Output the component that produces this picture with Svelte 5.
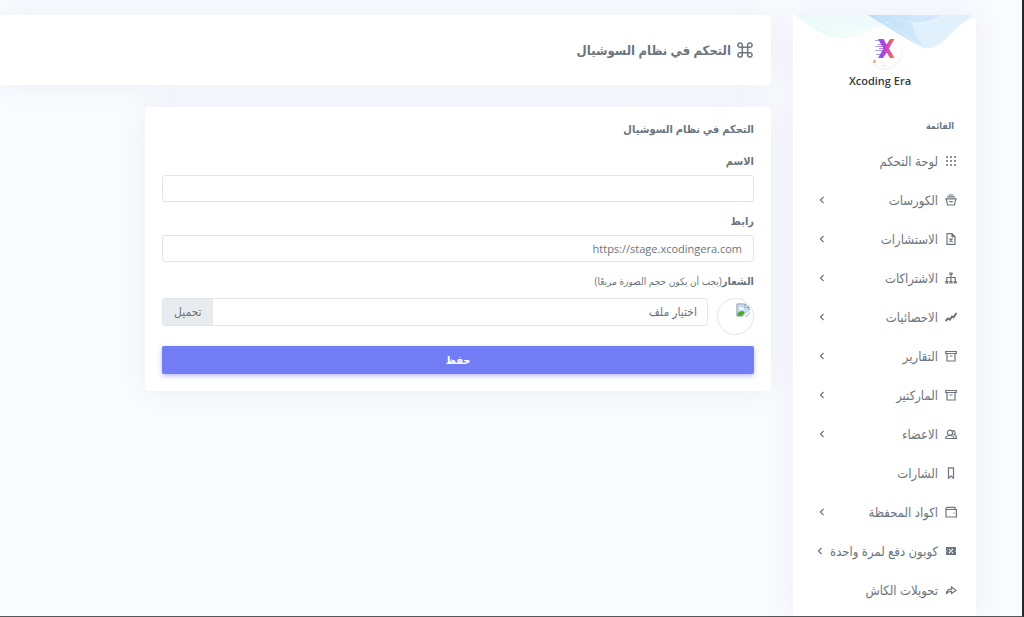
<script lang="ts">
  type Item = { label: string; icon: string; sub: boolean };

  const items: Item[] = [
    { label: "لوحة التحكم", icon: "grid", sub: false },
    { label: "الكورسات", icon: "basket", sub: true },
    { label: "الاستشارات", icon: "file", sub: true },
    { label: "الاشتراكات", icon: "sitemap", sub: true },
    { label: "الاحصائيات", icon: "chart", sub: true },
    { label: "التقارير", icon: "archive", sub: true },
    { label: "الماركتير", icon: "archive", sub: true },
    { label: "الاعضاء", icon: "users", sub: true },
    { label: "الشارات", icon: "bookmark", sub: false },
    { label: "اكواد المحفظة", icon: "wallet", sub: true },
    { label: "كوبون دفع لمرة واحدة", icon: "coupon", sub: true },
    { label: "تحويلات الكاش", icon: "share", sub: false },
  ];

  const dots = [2, 6, 10];

  let name = $state("");
  let link = $state("https://stage.xcodingera.com");
  let fileName = $state("اختيار ملف");

  function onfile(event: Event) {
    const input = event.currentTarget as HTMLInputElement;
    fileName = input.files?.[0]?.name ?? "اختيار ملف";
  }
</script>

{#snippet icon(kind: string)}
  <svg class="icon" viewBox="0 0 12 12" aria-hidden="true">
    {#if kind === "grid"}
      {#each dots as y}
        {#each dots as x}
          <rect class="dot" x={x - 1} y={y - 1} width="2" height="2" />
        {/each}
      {/each}
    {:else if kind === "basket"}
      <path d="M3.5 1h5M2 2.8h8M.3 4.8h11.4M1.3 5l1.200 6h7l1.200-6M4.200 7.700h3.600" />
    {:else if kind === "file"}
      <path d="M2 .7h5l3 3v7.600H2zM7 .7v3h3M4.500 5.500l3 3.500M7.500 5.500l-3 3.500" />
    {:else if kind === "sitemap"}
      <path d="M6 2v7M1.800 9V5.500h8.400V9" />
      <path d="M5 1h2v1.500H5zM.8 9.500h2V11h-2zM5 9.500h2V11H5zM9.200 9.500h2V11h-2z" />
    {:else if kind === "chart"}
      <path class="thick" d="M.5 10l2.500-2.500L4.800 8.700l2.300-3.200 1.500.8L11.500 2" />
    {:else if kind === "archive"}
      <path d="M.7 1.500h10.600v2H.7zM2 3.600V11h8V3.600M4.500 6h3" />
    {:else if kind === "users"}
      <circle cx="5" cy="4.700" r="2.600" />
      <path d="M.7 10.500c0-2 1.600-3 4.300-3s4 1 4 3zM7.500 2.700c2.500-.6 3.500 2.600 1.600 3.800 1.500.3 2.300 1.600 2.300 4H9" />
    {:else if kind === "bookmark"}
      <path d="M3.500.8h5v10.400L6 9l-2.500 2.200z" />
    {:else if kind === "wallet"}
      <path d="M1 3v8h10.400V3.500H1.800L1 2.500 2 1.300h8v2M8.500 7.200h1" />
    {:else if kind === "coupon"}
      <path class="solid" d="M1 2h10v3l-.6 1 .6 1v3H1V7l.6-1L1 5z" />
      <path class="cut" d="M4 8.200l4-4.400M4 4.200l1 .8M7 7.200l1 .8" />
    {:else}
      <path d="M1.300 10c.3-3.400 2-4.800 5.300-4.800V3L11 6.400 6.600 9.400V7.400C4 7.300 2.600 8 1.300 10z" />
    {/if}
  </svg>
{/snippet}

<div class="page" dir="rtl" lang="ar">
  <aside class="sidebar">
    <svg class="waves" viewBox="0 0 183 35" preserveAspectRatio="none" aria-hidden="true">
      <defs>
        <linearGradient id="blue" x1="0" x2="1">
          <stop offset="0" stop-color="#b9ddf8" />
          <stop offset="0.5" stop-color="#d3e9fb" />
          <stop offset="1" stop-color="#eef7fe" />
        </linearGradient>
        <linearGradient id="mint" x1="0" x2="1">
          <stop offset="0" stop-color="#e8faf7" />
          <stop offset="1" stop-color="#f8fefd" />
        </linearGradient>
      </defs>
      <path d="M2 0C20 13 31 23 49 23 68 23 83 11 100 8L120 0z" fill="url(#mint)" />
      <path d="M17 0C44 13 71 13 92 10L105 0z" fill="#eef9fb" />
      <path d="M158 15Q172 3 183 3V0h-20z" fill="#f2fbfc" />
      <path d="M75 0C92 10 112 24 131 33 151 36 158 11 181 1V0z" fill="url(#blue)" />
      <path d="M114 0C121 9 121 25 134 33 150 32 160 12 177 3V0z" fill="#e0f0fd" />
      <path d="M81 0C100 7 128 13 147 0z" fill="#c5e3f9" opacity="0.6" />
      <path
        d="M14 1Q37 23 63 18T102 2M84 1Q110 18 131 33Q153 31 181 2M103 3Q133 15 154 0"
        fill="none"
        stroke="#fff"
        stroke-width="0.7"
        opacity="0.5"
      />
    </svg>

    <div class="brand">
      <span class="logo">
        <svg viewBox="0 0 32 32" aria-hidden="true">
          <defs>
            <linearGradient id="xfill" gradientUnits="userSpaceOnUse" x1="6" x2="25" y1="0" y2="0">
              <stop offset="0" stop-color="#8b83ee" />
              <stop offset="0.35" stop-color="#9845ea" />
              <stop offset="0.65" stop-color="#cf4bc0" />
              <stop offset="1" stop-color="#f8733f" />
            </linearGradient>
          </defs>
          <path d="M9 3h5.500l3.200 5.500L21 3h4.500L20 12.500l5.500 9.500H21l-3.300-5.500L14 22H9l5.500-9.500z" fill="url(#xfill)" />
          <path
            d="M6 4.500h6M9 8.500h4M6 10.500h7M10 12.500h5M6 14.500h7M7 18.500h5"
            stroke="url(#xfill)"
            opacity="0.7"
          />
          <path d="M4 24h3v3H4z" fill="#f9b48f" />
          <path d="M9 26.500h18" stroke="#faf3f0" />
          <path d="M13 29.500h5" stroke="#f8ded5" />
        </svg>
      </span>
      <strong>Xcoding Era</strong>
    </div>

    <nav aria-label="القائمة">
      <h2>القائمة</h2>
      <ul>
        {#each items as item}
          <li>
            <a href="#menu">
              {@render icon(item.icon)}
              <span>{item.label}</span>
              {#if item.sub}
                <svg class="chevron" viewBox="0 0 6 8" aria-hidden="true"><path d="M4.500 1 1.500 4l3 3" /></svg>
              {/if}
            </a>
          </li>
        {/each}
      </ul>
    </nav>
  </aside>

  <main>
    <header class="card title">
      <svg class="command" viewBox="0 0 16 16" aria-hidden="true">
        <path
          d="M5.300 5.300h5.400v5.400H5.300zM5.300 5.300H3.200A2.200 2.200 0 1 1 5.300 3.200zM10.700 5.300V3.200a2.200 2.200 0 1 1 2.100 2.100zM10.700 10.700h2.100a2.200 2.200 0 1 1-2.100 2.100zM5.300 10.700v2.100a2.200 2.200 0 1 1-2.100-2.100z"
        />
      </svg>
      <h1>التحكم في نظام السوشيال</h1>
    </header>

    <form class="card" onsubmit={(event) => event.preventDefault()}>
      <h2>التحكم في نظام السوشيال</h2>

      <label for="name">الاسم</label>
      <input id="name" type="text" bind:value={name} />

      <label for="link">رابط</label>
      <input id="link" type="text" bind:value={link} />

      <label for="logo">الشعار<small>(يجب أن يكون حجم الصورة مربعًا)</small></label>
      <div class="upload">
        <span class="preview">
          <svg viewBox="0 0 16 16" aria-hidden="true">
            <path d="M1 1h9l5 4v10H1z" fill="#c6d9f5" stroke="#8b99a8" />
            <path d="M10 1v4h5z" fill="#fff" stroke="#8b99a8" />
            <path d="M3.500 6.500a2 2 0 0 1 3.500-1 1.500 1.500 0 0 1 2 2H3.500z" fill="#fff" />
            <path d="M1.500 14.500v-2c3-4 6-4 8.500-1.500l-3 3.500z" fill="#4ca52f" />
            <path d="M7 16 16 8v2l-6 6zM12 16l4-4v4z" fill="#fff" />
          </svg>
        </span>
        <label class="file" for="logo">
          <input id="logo" type="file" accept="image/*" onchange={onfile} />
          <span class="file-name">{fileName}</span>
          <span class="browse">تحميل</span>
        </label>
      </div>

      <button type="submit">حفظ</button>
    </form>
  </main>
</div>

<style>
  :global(body) { margin: 0; background: #fafbff; }
  .page {
    box-sizing: border-box;
    display: flex;
    gap: 22px;
    min-height: 100vh;
    padding: 15px 46px 0 0;
    border-right: 2px solid #252729;
    border-bottom: 1px solid #555659;
    background: #fafbff;
    color: #6c757d;
    font-family: "Open Sans", "DejaVu Sans Condensed", "DejaVu Sans", sans-serif;
    font-size: 11px;
    line-height: 16px;
    overflow-x: clip;
  }
  h1, h2, ul { margin: 0; padding: 0; }
  .sidebar {
    position: relative;
    flex: none;
    width: 183px;
    background: #fff;
    box-shadow: 0 0 28px rgba(60, 70, 120, 0.07);
  }
  .waves { position: absolute; inset: 0 0 auto; width: 100%; height: 35px; }
  .brand {
    position: relative;
    display: flex;
    flex-direction: column;
    align-items: center;
    gap: 5px;
    padding-top: 21px;
    color: #343a40;
  }
  .brand strong { padding-right: 9px; font-weight: 600; }
  .logo {
    width: 32px;
    height: 32px;
    overflow: hidden;
    border-radius: 50%;
    background: #fff;
    box-shadow: 0 1px 3px rgba(0, 0, 0, 0.08);
  }
  .logo svg { display: block; }
  nav { padding-top: 29px; }
  nav h2 { padding: 0 22px; font-size: 9px; }
  nav ul { padding-top: 7px; list-style: none; }
  nav a {
    display: flex;
    align-items: center;
    gap: 7px;
    height: 39px;
    padding: 0 19px 0 26px;
    color: inherit;
    font-size: 13px;
    text-decoration: none;
    white-space: nowrap;
  }
  svg { fill: none; }
  .icon { flex: none; width: 12px; height: 12px; stroke: currentColor; stroke-width: 1.2; }
  .icon .solid { fill: currentColor; stroke: none; }
  .icon .dot { fill: currentColor; stroke: none; opacity: 0.8; }
  .icon .thick { stroke-width: 2; }
  .icon .cut { stroke: #fff; }
  .chevron {
    flex: none;
    width: 6px;
    height: 8px;
    margin-right: auto;
    stroke: currentColor;
    stroke-width: 1.2;
  }
  main { flex: 1; min-width: 0; }
  .card {
    box-sizing: border-box;
    border-radius: 3px;
    background: #fff;
    box-shadow: 0 0 28px rgba(60, 70, 120, 0.07);
  }
  .title {
    display: flex;
    align-items: center;
    gap: 6px;
    height: 70px;
    margin-bottom: 22px;
    padding: 0 18px;
  }
  .title h1 { font-size: 13px; line-height: 20px; }
  .command { width: 16px; height: 16px; stroke: currentColor; stroke-width: 1.5; }
  form { width: 81.2%; padding: 14px 17px 17px; }
  form h2 { margin-bottom: 16px; font-size: 11px; }
  form > label { display: block; margin-bottom: 6px; font-weight: 700; }
  form small { font-size: 10px; font-weight: 400; }
  input[type="text"] {
    box-sizing: border-box;
    display: block;
    width: 100%;
    height: 27px;
    margin-bottom: 11px;
    padding: 0 11px;
    border: 1px solid #e2e5e8;
    border-radius: 3px;
    background: #fff;
    color: inherit;
    font: inherit;
  }
  input:focus { outline: 1px solid #727cf5; }
  .upload { display: flex; gap: 9px; margin: 9px 0 11px; }
  .preview {
    box-sizing: border-box;
    flex: none;
    width: 37px;
    height: 37px;
    padding: 4px 3px;
    border: 1px solid #e2e5e8;
    border-radius: 50%;
  }
  .preview svg { display: block; width: 14px; height: 14px; }
  .file {
    position: relative;
    box-sizing: border-box;
    display: flex;
    flex: 1;
    justify-content: space-between;
    height: 28px;
    border: 1px solid #e2e5e8;
    border-radius: 3px;
    font-size: 12px;
    line-height: 26px;
    cursor: pointer;
  }
  .file input { position: absolute; inset: 0; width: 100%; opacity: 0; cursor: pointer; }
  .file-name { padding: 0 10px; }
  .browse { padding: 0 11px; background: #e9ecef; }
  button {
    display: block;
    width: 100%;
    height: 28px;
    padding: 0;
    border: 0;
    border-radius: 2px;
    background: #727cf5;
    box-shadow: 0 2px 5px rgba(114, 124, 245, 0.5);
    color: #fff;
    font: inherit;
    font-weight: 700;
    cursor: pointer;
  }
</style>
